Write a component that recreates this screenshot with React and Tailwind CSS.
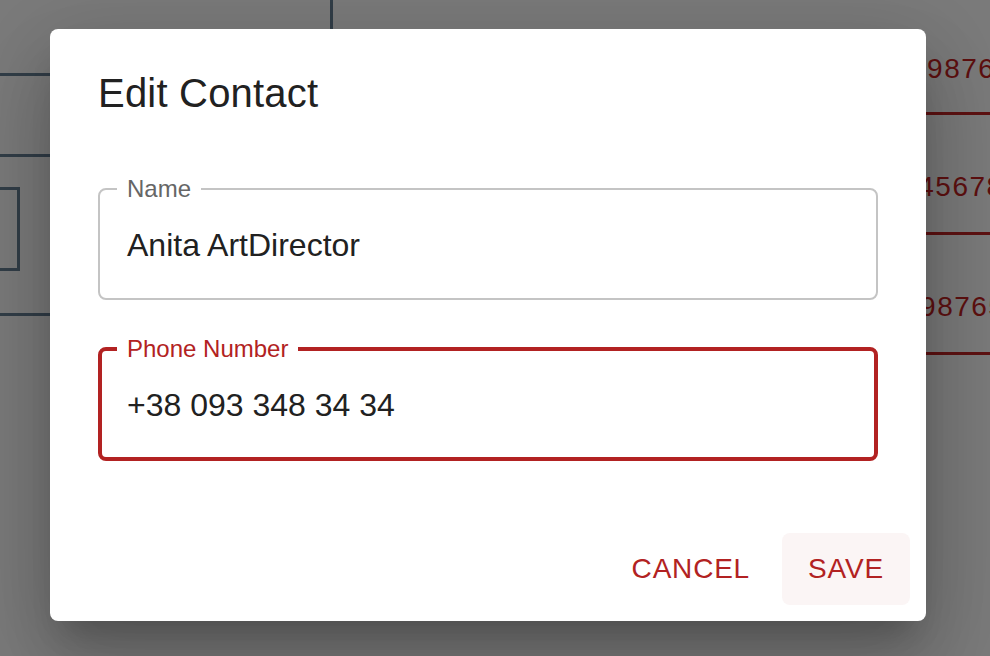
export default function App() {
  return (
    <div className="relative h-[656px] w-[990px] overflow-hidden bg-[#7b7b7b] font-['Liberation_Sans',Arial,sans-serif]">
      {/* page behind the dialog, dimmed by the backdrop */}
      <div className="flex h-full w-full">
        <div className="w-[600px] shrink-0">
          <div className="flex h-[76px] border-b-[3px] border-[#323e48]">
            <div className="ml-[330px] h-full w-[3px] bg-[#323e48]" />
          </div>
          <div className="h-[81px] border-b-[3px] border-[#323e48]" />
          <div className="h-[159px] border-b-[3px] border-[#323e48] pt-[30px]">
            <div className="ml-[-12px] h-[84px] w-[32px] border-[3px] border-[#323e48]" />
          </div>
        </div>
        <div className="min-w-0 flex-1 overflow-hidden">
          {['0987654321', '0123456789', '0987654321'].map((n, i) => (
            <div
              key={i}
              className={
                'flex items-center whitespace-nowrap border-b-[3px] border-[#5e1212] pt-[26px] text-[28px] tracking-[1.5px] text-[#5e1010] ' +
                (i === 0 ? 'h-[115px]' : 'h-[120px]')
              }
            >
              <span className={i === 0 ? 'ml-[310px]' : i === 1 ? 'ml-[250px]' : 'ml-[303px]'}>{n}</span>
            </div>
          ))}
        </div>
      </div>

      {/* dialog */}
      <div className="absolute inset-0 pl-[50px] pt-[29px]">
        <div className="flex w-[876px] flex-col rounded-lg bg-white shadow-[0_22px_30px_-14px_rgba(0,0,0,0.2),0_48px_76px_6px_rgba(0,0,0,0.14),0_18px_92px_16px_rgba(0,0,0,0.12)]">
          <h2 className="px-[48px] py-[32px] text-[40px] leading-[64px] tracking-[0.2px] text-[#212121]">Edit Contact</h2>

          <div className="flex flex-col gap-[35px] px-[48px] pb-[56px] pt-[18px]">
            <fieldset className="rounded-lg border-2 border-[#c4c4c4]">
              <legend className="ml-[17px] px-[10px] text-[24px] leading-[28px] text-[#666666]">Name</legend>
              <div className="h-[95px] pl-[27px] pt-[22px] text-[32px] leading-[40px] text-[#212121]">Anita ArtDirector</div>
            </fieldset>
            <fieldset className="rounded-lg border-4 border-[#b22222]">
              <legend className="ml-[15px] px-[10px] text-[24px] leading-[28px] text-[#b22222]">Phone Number</legend>
              <div className="h-[94px] pl-[25px] pt-[22px] text-[32px] leading-[40px] text-[#212121]">+38 093 348 34 34</div>
            </fieldset>
          </div>

          <div className="flex justify-end gap-4 p-4">
            <button className="h-[72px] rounded-lg px-4 text-[28px] tracking-[0.8px] text-[#b22222]">CANCEL</button>
            <button className="h-[72px] min-w-[128px] rounded-lg bg-[#fbf5f5] px-4 text-[28px] tracking-[0.8px] text-[#b22222]">SAVE</button>
          </div>
        </div>
      </div>
    </div>
  )
}
